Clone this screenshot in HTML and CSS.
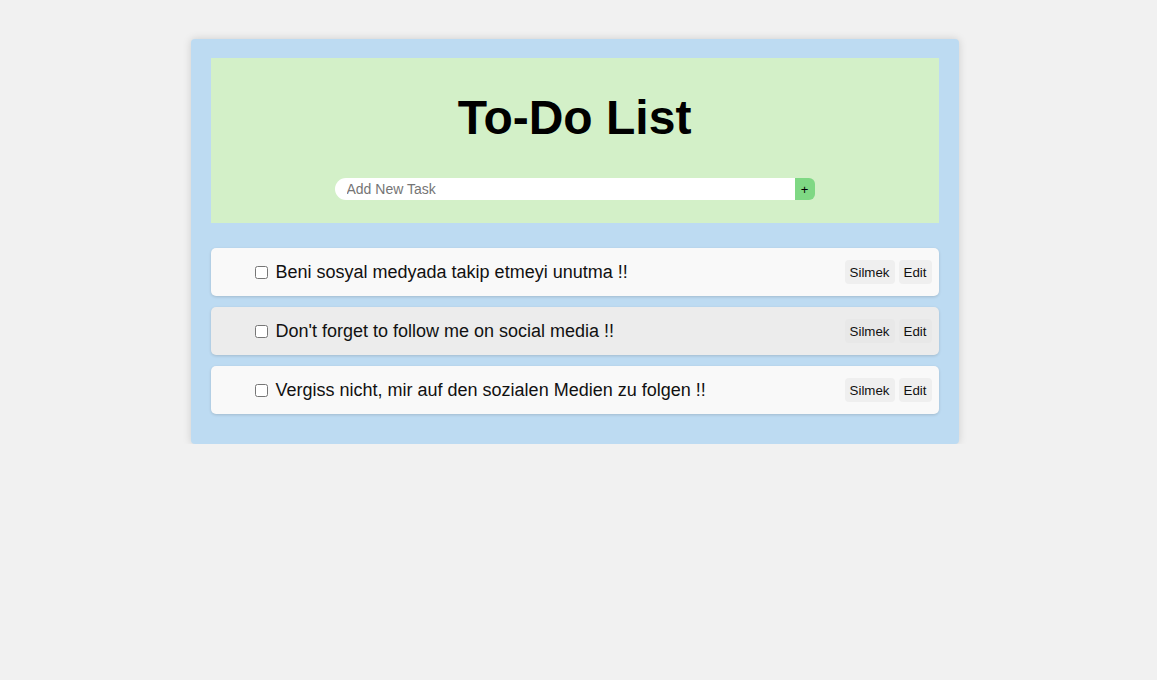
FILE: index.html
```html
<!DOCTYPE html>
<html>
<head>
<meta charset="utf-8">
<link rel="stylesheet" href="styles.css">
</head>
<body>
<div class="app">
  <div class="header">
    <h1 class="title">To-Do List</h1>
    <div class="add-row">
      <input class="add-input" type="text" placeholder="Add New Task">
      <button class="add-btn">+</button>
    </div>
  </div>
  <ul class="tasks">
    <li class="task">
      <input class="check" type="checkbox">
      <span class="task-text">Beni sosyal medyada takip etmeyi unutma !!</span>
      <button class="btn">Silmek</button>
      <button class="btn">Edit</button>
    </li>
    <li class="task alt">
      <input class="check" type="checkbox">
      <span class="task-text">Don't forget to follow me on social media !!</span>
      <button class="btn">Silmek</button>
      <button class="btn">Edit</button>
    </li>
    <li class="task">
      <input class="check" type="checkbox">
      <span class="task-text">Vergiss nicht, mir auf den sozialen Medien zu folgen !!</span>
      <button class="btn">Silmek</button>
      <button class="btn">Edit</button>
    </li>
  </ul>
</div>
</body>
</html>
```

FILE: styles.css
```css
html, body {
  margin: 0;
  padding: 0;
}
body {
  background: #f1f1f1;
  font-family: "Liberation Sans", Arial, sans-serif;
  padding: 39px 8px 0 0;
}
.app {
  width: 728px;
  margin: 0 auto;
  padding: 19px 20px 30px;
  background: #bddbf2;
  border-radius: 4px;
  box-shadow: 0 0 8px rgba(0, 0, 0, 0.15);
}
.header {
  background: #d3f0c8;
  padding: 32px 0 23px;
  display: flex;
  flex-direction: column;
  align-items: center;
}
.title {
  margin: 0 0 32px;
  font-size: 48px;
  line-height: 56px;
  font-weight: bold;
  color: #000;
}
.add-row {
  display: flex;
  height: 22px;
}
.add-input {
  width: 460px;
  height: 22px;
  box-sizing: border-box;
  border: none;
  outline: none;
  border-radius: 11px 0 0 11px;
  padding: 0 12px;
  font-family: "Liberation Sans", Arial, sans-serif;
  font-size: 14px;
  background: #fff;
}
.add-input::placeholder {
  color: #757575;
}
.add-btn {
  width: 20px;
  height: 22px;
  border: none;
  padding: 0;
  background: #7fd884;
  border-radius: 0 6px 6px 0;
  font-family: "Liberation Sans", Arial, sans-serif;
  font-size: 13px;
  color: #000;
}
.tasks {
  list-style: none;
  margin: 25px 0 0;
  padding: 0;
  display: flex;
  flex-direction: column;
  gap: 11px;
}
.task {
  display: flex;
  align-items: center;
  height: 48px;
  box-sizing: border-box;
  padding: 0 7px 0 42px;
  background: #f9f9f9;
  border-radius: 5px;
  box-shadow: 0 1px 3px rgba(0, 0, 0, 0.15);
}
.task.alt {
  background: #ececec;
}
.check {
  width: 13px;
  height: 13px;
  margin: 0 8px 0 2px;
}
.task-text {
  flex: 1;
  font-size: 18px;
  color: #111;
}
.btn {
  height: 24px;
  border: none;
  border-radius: 4px;
  background: #efefef;
  padding: 0 5px;
  margin-left: 5px;
  font-family: "Liberation Sans", Arial, sans-serif;
  font-size: 13.33px;
  color: #111;
}
.btn + .btn {
  margin-left: 4px;
}
.task.alt .btn {
  background: #e8e8e8;
}
```
